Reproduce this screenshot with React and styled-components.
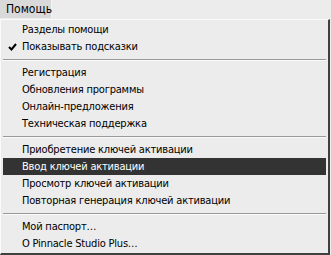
import React from "react";
import styled, { createGlobalStyle } from "styled-components";

const Global = createGlobalStyle`
  html, body { margin: 0; padding: 0; background: #ececec; }
  body { width: 331px; height: 255px; overflow: hidden; }
  #root { width: 331px; height: 255px; }
`;

const Screen = styled.div`
  width: 331px;
  height: 255px;
  background: #ececec;
  font-family: "DejaVu Sans Condensed", "Liberation Sans", Arial, sans-serif;
  font-size: 11px;
  color: #000;
  display: flex;
  flex-direction: column;
`;

const MenuBar = styled.div`
  height: 18px;
  display: flex;
  align-items: stretch;
  padding-bottom: 1px;
  background: #ececec;
`;

const BarItem = styled.div`
  width: 52px;
  display: flex;
  align-items: center;
  padding-left: 6px;
  box-sizing: border-box;
  background: #d9d9d9;
  border-right: 1px solid #f4f4f4;
  font-size: 12px;
`;

const Panel = styled.div`
  width: 330px;
  height: 236px;
  box-sizing: border-box;
  border-top: 1px solid #fafafa;
  border-left: 1px solid #fafafa;
  border-right: 2px solid #404040;
  border-bottom: 2px solid #404040;
  padding: 1px 1px 0;
  display: flex;
  flex-direction: column;
  background: #ececec;
`;

const Item = styled.div`
  height: 17px;
  display: flex;
  align-items: center;
  margin: 0 1px;
  padding-left: 19px;
  position: relative;
  background: ${(p) => (p.$active ? "#333333" : "transparent")};
  color: ${(p) => (p.$active ? "#ffffff" : "#000000")};
  font-size: 11px;
  letter-spacing: -0.2px;
  white-space: nowrap;
`;

const Check = styled.svg`
  position: absolute;
  left: 5px;
  top: 5px;
`;

const Separator = styled.div`
  height: 9px;
  display: flex;
  flex-direction: column;
  justify-content: center;
  padding: 0 1px;
  &::before {
    content: "";
    display: block;
    height: 1px;
    background: #999999;
  }
  &::after {
    content: "";
    display: block;
    height: 1px;
    background: #fafafa;
  }
`;

const groups = [
  [
    { t: "Разделы помощи" },
    { t: "Показывать подсказки", check: true },
  ],
  [
    { t: "Регистрация" },
    { t: "Обновления программы" },
    { t: "Онлайн-предложения" },
    { t: "Техническая поддержка" },
  ],
  [
    { t: "Приобретение ключей активации" },
    { t: "Ввод ключей активации", active: true },
    { t: "Просмотр ключей активации" },
    { t: "Повторная генерация ключей активации" },
  ],
  [{ t: "Мой паспорт…" }, { t: "O Pinnacle Studio Plus…" }],
];

export default function App() {
  return (
    <Screen>
      <Global />
      <MenuBar>
        <BarItem>Помощь</BarItem>
      </MenuBar>
      <Panel>
        {groups.map((g, gi) => (
          <React.Fragment key={gi}>
            {gi > 0 && <Separator />}
            {g.map((it) => (
              <Item key={it.t} $active={it.active}>
                {it.check && (
                  <Check width="9" height="8" viewBox="0 0 9 8">
                    <path d="M1 4 L3.5 6.5 L8 1" stroke="#000" strokeWidth="2" fill="none" />
                  </Check>
                )}
                {it.t}
              </Item>
            ))}
          </React.Fragment>
        ))}
      </Panel>
    </Screen>
  );
}
